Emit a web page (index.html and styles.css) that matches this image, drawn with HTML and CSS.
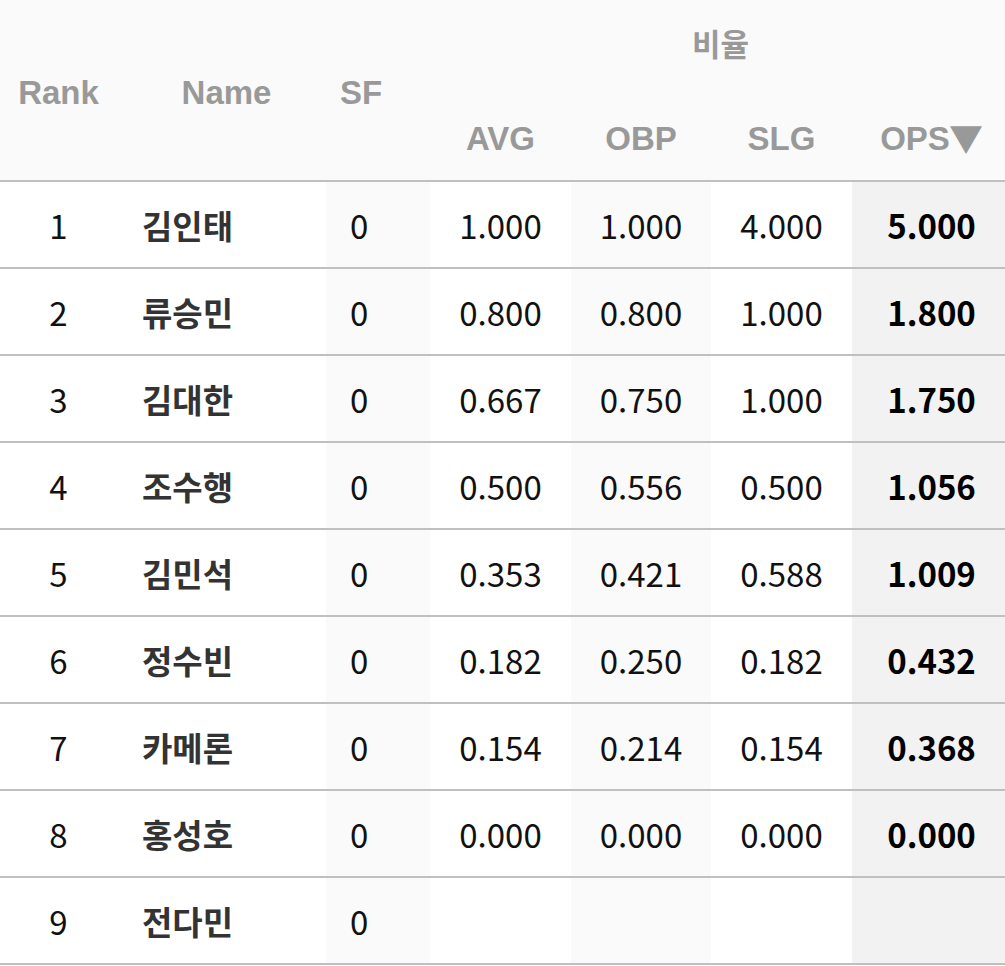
FILE: index.html
```html
<!DOCTYPE html>
<html lang="ko">
<head>
<meta charset="utf-8">
<link rel="stylesheet" href="styles.css">
</head>
<body>
<div class="wrap">
<table class="stats">
  <colgroup>
    <col class="c-rank"><col class="c-name"><col class="c-sf shade">
    <col class="c-avg"><col class="c-obp shade"><col class="c-slg"><col class="c-ops shade-dark">
  </colgroup>
  <thead>
    <tr class="h1">
      <th rowspan="2" class="rank">Rank</th>
      <th rowspan="2" class="name">Name</th>
      <th rowspan="2" class="sf">SF</th>
      <th colspan="4" class="group">비율</th>
    </tr>
    <tr class="h2">
      <th>AVG</th>
      <th>OBP</th>
      <th>SLG</th>
      <th>OPS<span class="sort">▼</span></th>
    </tr>
  </thead>
  <tbody>
    <tr><td class="rank">1</td><td class="name">김인태</td><td class="sf">0</td><td>1.000</td><td>1.000</td><td>4.000</td><td class="ops">5.000</td></tr>
    <tr><td class="rank">2</td><td class="name">류승민</td><td class="sf">0</td><td>0.800</td><td>0.800</td><td>1.000</td><td class="ops">1.800</td></tr>
    <tr><td class="rank">3</td><td class="name">김대한</td><td class="sf">0</td><td>0.667</td><td>0.750</td><td>1.000</td><td class="ops">1.750</td></tr>
    <tr><td class="rank">4</td><td class="name">조수행</td><td class="sf">0</td><td>0.500</td><td>0.556</td><td>0.500</td><td class="ops">1.056</td></tr>
    <tr><td class="rank">5</td><td class="name">김민석</td><td class="sf">0</td><td>0.353</td><td>0.421</td><td>0.588</td><td class="ops">1.009</td></tr>
    <tr><td class="rank">6</td><td class="name">정수빈</td><td class="sf">0</td><td>0.182</td><td>0.250</td><td>0.182</td><td class="ops">0.432</td></tr>
    <tr><td class="rank">7</td><td class="name">카메론</td><td class="sf">0</td><td>0.154</td><td>0.214</td><td>0.154</td><td class="ops">0.368</td></tr>
    <tr><td class="rank">8</td><td class="name">홍성호</td><td class="sf">0</td><td>0.000</td><td>0.000</td><td>0.000</td><td class="ops">0.000</td></tr>
    <tr><td class="rank">9</td><td class="name">전다민</td><td class="sf">0</td><td></td><td></td><td></td><td class="ops"></td></tr>
  </tbody>
</table>
</div>
</body>
</html>
```
FILE: styles.css
```css
html, body {
  margin: 0;
  padding: 0;
  background: #ffffff;
  overflow: hidden;
}
.wrap {
  width: 1005px;
  overflow: hidden;
}
.stats {
  width: 1011px;
  border-collapse: collapse;
  table-layout: fixed;
  font-family: "Noto Sans CJK KR", "Noto Sans", sans-serif;
}
.c-rank { width: 117px; }
.c-name { width: 209px; }
.c-sf { width: 104px; }
.c-avg { width: 141px; }
.c-obp { width: 140px; }
.c-slg { width: 141px; }
.c-ops { width: 159px; }
.shade { background: #fafafa; }
.shade-dark { background: #f2f2f2; }

thead tr { background: #fafafa; }
th {
  font-family: "Liberation Sans", "Noto Sans CJK KR", sans-serif;
  font-weight: bold;
  font-size: 33px;
  line-height: 40px;
  color: #999999;
  text-align: center;
  padding: 0;
}
.h1 { height: 90px; }
.h2 { height: 91px; }
.h2 th {
  border-bottom: 2px solid #c0c0c0;
  padding-top: 8px;
}
.h1 th.rank, .h1 th.name, .h1 th.sf {
  border-bottom: 2px solid #c0c0c0;
  padding-top: 6px;
}
th.group {
  font-family: "Noto Sans CJK KR", sans-serif;
  font-size: 31px;
  padding-bottom: 4px;
  vertical-align: middle;
}
th.name { padding-left: 10px; }
th.sf { text-align: left; padding-left: 14px; }
.sort {
  font-family: "Noto Sans CJK KR", sans-serif;
  font-size: 34px;
  line-height: 0;
  margin-left: -1px;
  position: relative;
  top: 2px;
}

tbody tr { height: 87px; }
td {
  border-bottom: 2px solid #c0c0c0;
  font-size: 33px;
  color: #111111;
  text-align: center;
  padding: 0;
  vertical-align: middle;
}
td.name {
  text-align: left;
  padding-left: 25px;
  font-weight: bold;
  color: #333333;
}
td.sf {
  text-align: left;
  padding-left: 24px;
}
td.ops {
  font-weight: bold;
  color: #000000;
}
```
